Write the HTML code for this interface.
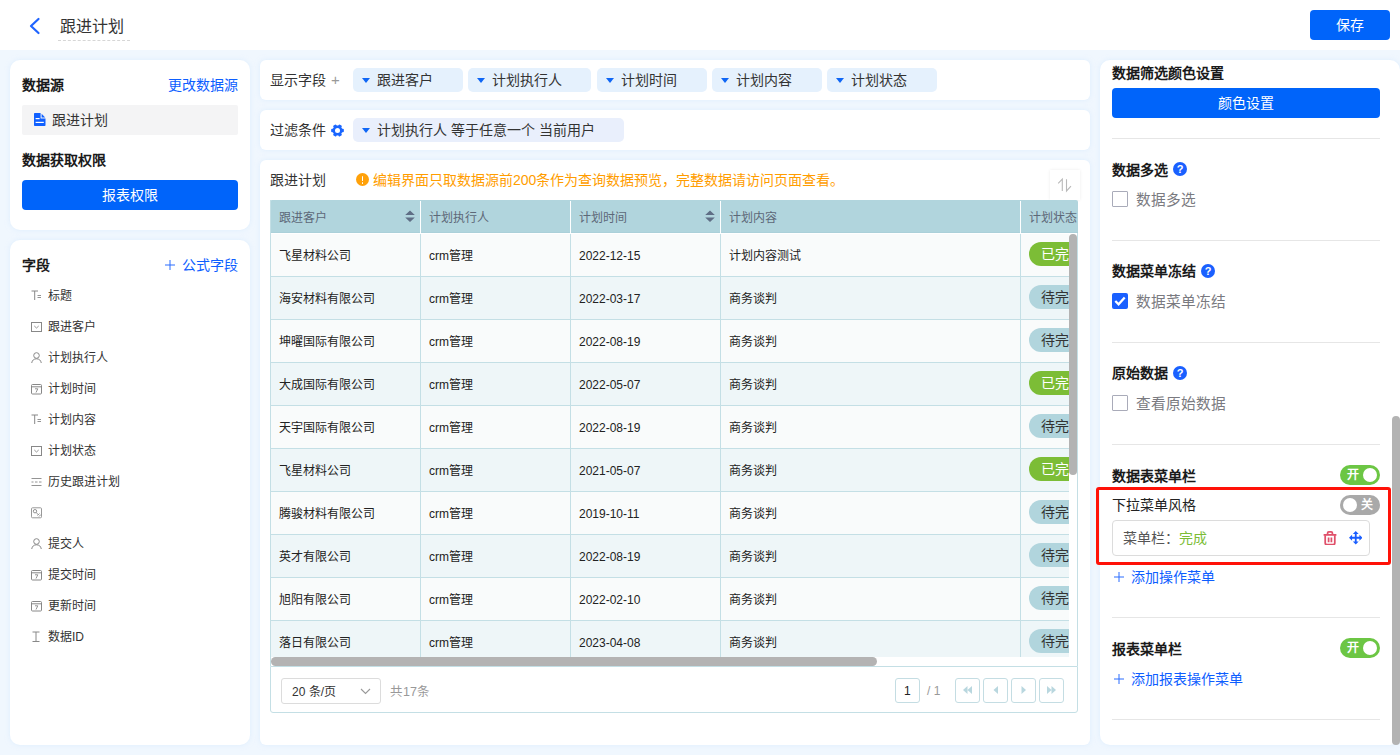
<!DOCTYPE html>
<html lang="zh-CN"><head><meta charset="utf-8">
<style>
*{box-sizing:border-box;margin:0;padding:0}
html,body{width:1400px;height:755px;overflow:hidden}
body{position:relative;background:#f0f7fe;font-family:"Liberation Sans",sans-serif;font-size:14px;color:#333}
.abs{position:absolute}
.panel{position:absolute;background:#fff;border-radius:10px;box-shadow:0 0 5px rgba(205,230,253,0.55)}
.t{position:absolute;white-space:nowrap;line-height:1}
.b{font-weight:bold;color:#1a1a1a}
.blue{color:#0d5eff}
.btn{position:absolute;background:#0064fa;color:#fff;border-radius:4px;text-align:center;font-size:14px}
.chip{position:absolute;top:68px;height:24px;background:#e5f1fd;border-radius:5px}
.caret{position:absolute;width:0;height:0;border-left:4px solid transparent;border-right:4px solid transparent;border-top:5px solid #0f66f5}
.fi{position:absolute;left:48px;font-size:12px;color:#333;line-height:1}
.cell{position:absolute;font-size:12px;color:#222;line-height:1;white-space:nowrap}
.hd{position:absolute;font-size:12px;color:#5d6878;line-height:1;white-space:nowrap}
.pill{position:absolute;left:1029px;width:60px;height:24px;border-radius:12px;color:#fff;font-size:14px;line-height:24px;padding-left:12px}
.div{position:absolute;left:1112px;width:268px;height:1px;background:#e6e6e6}
.tg{position:absolute;left:1340px;width:40px;height:20px;border-radius:10px}
.knob{position:absolute;top:2px;width:16px;height:16px;border-radius:8px;background:#fff}
.cb{position:absolute;left:1112px;width:16px;height:16px;border:1px solid #a9abb9;border-radius:1px;background:#fff}
.q{position:absolute;width:14px;height:14px;border-radius:7px;background:#1a60ff;color:#fff;font-size:11px;font-weight:bold;text-align:center;line-height:14px}
.pg{position:absolute;top:678px;width:25px;height:25px;border:1px solid #c4dde3;border-radius:3px;background:#fff}
</style></head><body>

<div class="abs" style="left:0;top:0;width:1400px;height:50px;background:#fff"></div>
<svg class="abs" style="left:27px;top:16px" width="16" height="20" viewBox="0 0 16 20"><path d="M11.5 3 L4 10 L11.5 17" fill="none" stroke="#1f64ff" stroke-width="2.2" stroke-linecap="round" stroke-linejoin="round"/></svg>
<div class="t" style="left:60px;top:19px;font-size:16px;color:#333">跟进计划</div>
<div class="abs" style="left:58px;top:40px;width:72px;border-top:1px dashed #d6d6d6"></div>
<div class="btn" style="left:1310px;top:10px;width:80px;height:30px;line-height:30px">保存</div>
<div class="panel" style="left:10px;top:60px;width:240px;height:170px"></div>
<div class="t b" style="left:22px;top:78px">数据源</div>
<div class="t blue" style="left:168px;top:78px">更改数据源</div>
<div class="abs" style="left:22px;top:105px;width:216px;height:30px;background:#f4f4f5;border-radius:2px"></div>
<svg class="abs" style="left:33.5px;top:113px" width="12" height="13" viewBox="0 0 12 13"><path d="M0.8 0 H6.6 V5.4 H11.5 V12.2 Q11.5 13 10.7 13 H0.8 Q0 13 0 12.2 V0.8 Q0 0 0.8 0 Z" fill="#1060ff"/><path d="M7.6 0.7 L11.2 4.4 H7.6 Z" fill="#1060ff"/><rect x="1.6" y="5" width="4" height="1.2" fill="#fff"/><rect x="1.6" y="8.8" width="8.2" height="1.2" fill="#fff"/></svg>
<div class="t" style="left:52px;top:113px">跟进计划</div>
<div class="t b" style="left:22px;top:153px">数据获取权限</div>
<div class="btn" style="left:22px;top:180px;width:216px;height:30px;line-height:30px">报表权限</div>
<div class="panel" style="left:10px;top:240px;width:240px;height:505px"></div>
<div class="t b" style="left:22px;top:258px">字段</div>
<svg class="abs" style="left:165px;top:260px" width="10" height="10" viewBox="0 0 10 10"><path d="M5 0 V10 M0 5 H10" stroke="#2a6cff" stroke-width="1"/></svg>
<div class="t blue" style="left:182px;top:258px">公式字段</div>
<svg class="abs" style="left:30.5px;top:290px" width="11" height="12" viewBox="0 0 11 12"><path d="M0.5 1 H7 M3.7 1 V10" stroke="#888" stroke-width="1" fill="none"/><path d="M6.5 5.5 H10 M6.5 7.5 H10" stroke="#888" stroke-width="0.9" fill="none"/></svg>
<div class="fi" style="top:290px">标题</div>
<svg class="abs" style="left:30.5px;top:321px" width="11" height="12" viewBox="0 0 11 12"><rect x="0.5" y="1.5" width="10" height="9" fill="none" stroke="#888" stroke-width="1"/><path d="M3.3 5 L5.5 7 L7.7 5" fill="none" stroke="#888" stroke-width="0.9"/></svg>
<div class="fi" style="top:321px">跟进客户</div>
<svg class="abs" style="left:30.5px;top:352px" width="11" height="12" viewBox="0 0 11 12"><circle cx="5.5" cy="3.5" r="2.8" fill="none" stroke="#888" stroke-width="1"/><path d="M0.7 11 Q1.5 6.8 5.5 6.8 Q9.5 6.8 10.3 11" fill="none" stroke="#888" stroke-width="1"/></svg>
<div class="fi" style="top:352px">计划执行人</div>
<svg class="abs" style="left:30.5px;top:383px" width="11" height="12" viewBox="0 0 11 12"><rect x="0.5" y="1.5" width="10" height="9.5" rx="1" fill="none" stroke="#888" stroke-width="1"/><path d="M0.5 3.8 H10.5" stroke="#888" stroke-width="1"/><path d="M4 5.8 H6.8 L5 9.5" fill="none" stroke="#888" stroke-width="0.9"/></svg>
<div class="fi" style="top:383px">计划时间</div>
<svg class="abs" style="left:30.5px;top:414px" width="11" height="12" viewBox="0 0 11 12"><path d="M0.5 1 H7 M3.7 1 V10" stroke="#888" stroke-width="1" fill="none"/><path d="M6.5 5.5 H10 M6.5 7.5 H10" stroke="#888" stroke-width="0.9" fill="none"/></svg>
<div class="fi" style="top:414px">计划内容</div>
<svg class="abs" style="left:30.5px;top:445px" width="11" height="12" viewBox="0 0 11 12"><rect x="0.5" y="1.5" width="10" height="9" fill="none" stroke="#888" stroke-width="1"/><path d="M3.3 5 L5.5 7 L7.7 5" fill="none" stroke="#888" stroke-width="0.9"/></svg>
<div class="fi" style="top:445px">计划状态</div>
<svg class="abs" style="left:30.5px;top:476px" width="11" height="12" viewBox="0 0 11 12"><path d="M0.5 2.5 H10.5 M0.5 6 H2.5 M4 6 H6.5 M8 6 H10.5 M0.5 9.5 H10.5" stroke="#888" stroke-width="0.9" fill="none"/></svg>
<div class="fi" style="top:476px">历史跟进计划</div>
<svg class="abs" style="left:30.5px;top:507px" width="11" height="12" viewBox="0 0 11 12"><rect x="0.5" y="0.8" width="10" height="10" rx="1" fill="none" stroke="#999" stroke-width="1"/><circle cx="4" cy="4.2" r="1.7" fill="none" stroke="#888" stroke-width="0.9"/><path d="M5.2 5.6 L7 7.4 M6.5 8.5 L8.5 6.5 M8 9.5 L10 7.5" fill="none" stroke="#888" stroke-width="0.9"/></svg>
<svg class="abs" style="left:30.5px;top:538px" width="11" height="12" viewBox="0 0 11 12"><circle cx="5.5" cy="3.5" r="2.8" fill="none" stroke="#888" stroke-width="1"/><path d="M0.7 11 Q1.5 6.8 5.5 6.8 Q9.5 6.8 10.3 11" fill="none" stroke="#888" stroke-width="1"/></svg>
<div class="fi" style="top:538px">提交人</div>
<svg class="abs" style="left:30.5px;top:569px" width="11" height="12" viewBox="0 0 11 12"><rect x="0.5" y="1.5" width="10" height="9.5" rx="1" fill="none" stroke="#888" stroke-width="1"/><path d="M0.5 3.8 H10.5" stroke="#888" stroke-width="1"/><path d="M4 5.8 H6.8 L5 9.5" fill="none" stroke="#888" stroke-width="0.9"/></svg>
<div class="fi" style="top:569px">提交时间</div>
<svg class="abs" style="left:30.5px;top:600px" width="11" height="12" viewBox="0 0 11 12"><rect x="0.5" y="1.5" width="10" height="9.5" rx="1" fill="none" stroke="#888" stroke-width="1"/><path d="M0.5 3.8 H10.5" stroke="#888" stroke-width="1"/><path d="M4 5.8 H6.8 L5 9.5" fill="none" stroke="#888" stroke-width="0.9"/></svg>
<div class="fi" style="top:600px">更新时间</div>
<svg class="abs" style="left:30.5px;top:631px" width="11" height="12" viewBox="0 0 11 12"><path d="M1.5 1 H8.5 M5 1 V10 M1.5 10.5 H8.5" stroke="#888" stroke-width="1" fill="none"/></svg>
<div class="fi" style="top:631px">数据ID</div>
<div class="panel" style="left:260px;top:60px;width:830px;height:40px;border-radius:6px"></div>
<div class="panel" style="left:260px;top:110px;width:830px;height:40px;border-radius:6px"></div>
<div class="panel" style="left:260px;top:160px;width:830px;height:585px;border-radius:6px"></div>
<div class="t" style="left:270px;top:73px">显示字段</div>
<div class="t" style="left:331px;top:72px;color:#999;font-size:15px">+</div>
<div class="chip" style="left:353px;width:110px"></div>
<div class="caret" style="left:362px;top:78px"></div>
<div class="t" style="left:377px;top:73px">跟进客户</div>
<div class="chip" style="left:468px;width:123px"></div>
<div class="caret" style="left:477px;top:78px"></div>
<div class="t" style="left:492px;top:73px">计划执行人</div>
<div class="chip" style="left:597px;width:110px"></div>
<div class="caret" style="left:606px;top:78px"></div>
<div class="t" style="left:621px;top:73px">计划时间</div>
<div class="chip" style="left:712px;width:110px"></div>
<div class="caret" style="left:721px;top:78px"></div>
<div class="t" style="left:736px;top:73px">计划内容</div>
<div class="chip" style="left:827px;width:110px"></div>
<div class="caret" style="left:836px;top:78px"></div>
<div class="t" style="left:851px;top:73px">计划状态</div>
<div class="t" style="left:270px;top:123px">过滤条件</div>
<svg class="abs" style="left:331px;top:123.5px" width="13" height="13" viewBox="0 0 26 26"><g fill="#1a66ff"><circle cx="13" cy="13" r="9.8"/><rect x="9.5" y="0.3" width="7" height="6" rx="2" transform="rotate(30 13 13)"/><rect x="9.5" y="0.3" width="7" height="6" rx="2" transform="rotate(90 13 13)"/><rect x="9.5" y="0.3" width="7" height="6" rx="2" transform="rotate(150 13 13)"/><rect x="9.5" y="0.3" width="7" height="6" rx="2" transform="rotate(210 13 13)"/><rect x="9.5" y="0.3" width="7" height="6" rx="2" transform="rotate(270 13 13)"/><rect x="9.5" y="0.3" width="7" height="6" rx="2" transform="rotate(330 13 13)"/></g><circle cx="13" cy="13" r="5" fill="#fff"/></svg>
<div class="chip" style="left:353px;top:118px;width:271px;background:#e9effc"></div>
<div class="caret" style="left:362px;top:128px"></div>
<div class="t" style="left:377px;top:123px">计划执行人 等于任意一个 当前用户</div>
<div class="t" style="left:270px;top:173px">跟进计划</div>
<div class="abs" style="left:356px;top:173px;width:13px;height:13px;border-radius:7px;background:#ffa10a"></div>
<div class="abs" style="left:361.7px;top:175.5px;width:1.8px;height:5px;background:#fff;border-radius:1px"></div>
<div class="abs" style="left:361.7px;top:182px;width:1.8px;height:1.8px;background:#fff;border-radius:1px"></div>
<div class="t" style="left:373px;top:173px;color:#ff9d00;font-size:14px">编辑界面只取数据源前200条作为查询数据预览，完整数据请访问页面查看。</div>
<div class="abs" style="left:1050px;top:170px;width:30px;height:30px;background:#fff;box-shadow:0 0 3px rgba(0,0,0,0.08)"></div>
<svg class="abs" style="left:1055px;top:175px" width="20" height="20" viewBox="0 0 20 20"><path d="M3.2 8.3 L7.3 4.2 V16 M11.5 4.2 V16 L16 11.2" fill="none" stroke="#b9b9b9" stroke-width="1.1"/></svg>
<div class="abs" style="left:270px;top:200px;width:808px;height:33px;background:#b1d5dd;border-radius:2px 2px 0 0;border-bottom:1px solid #abd0d9"></div>
<div class="abs" style="left:420px;top:201px;width:1px;height:32px;background:#fff"></div>
<div class="abs" style="left:570px;top:201px;width:1px;height:32px;background:#fff"></div>
<div class="abs" style="left:720px;top:201px;width:1px;height:32px;background:#fff"></div>
<div class="abs" style="left:1020px;top:201px;width:1px;height:32px;background:#fff"></div>
<div class="hd" style="left:279px;top:212px">跟进客户</div>
<div class="hd" style="left:429px;top:212px">计划执行人</div>
<div class="hd" style="left:579px;top:212px">计划时间</div>
<div class="hd" style="left:729px;top:212px">计划内容</div>
<div class="hd" style="left:1029px;top:212px">计划状态</div>
<svg class="abs" style="left:405px;top:210px" width="10" height="13" viewBox="0 0 10 13"><path d="M5 0.5 L9.8 5 H0.2 Z M0.2 7.5 H9.8 L5 12 Z" fill="#5f6e85"/></svg>
<svg class="abs" style="left:705px;top:210px" width="10" height="13" viewBox="0 0 10 13"><path d="M5 0.5 L9.8 5 H0.2 Z M0.2 7.5 H9.8 L5 12 Z" fill="#5f6e85"/></svg>
<div class="abs" style="left:270px;top:234px;width:799px;height:423px;overflow:hidden">
<div class="abs" style="left:0;top:0px;width:808px;height:43px;background:#f9fbfb;border-bottom:1px solid #c4dfe5"></div>
<div class="abs" style="left:150px;top:0px;width:1px;height:43px;background:#c4dfe5"></div>
<div class="abs" style="left:300px;top:0px;width:1px;height:43px;background:#c4dfe5"></div>
<div class="abs" style="left:450px;top:0px;width:1px;height:43px;background:#c4dfe5"></div>
<div class="abs" style="left:750px;top:0px;width:1px;height:43px;background:#c4dfe5"></div>
<div class="cell" style="left:9px;top:16px">飞星材料公司</div>
<div class="cell" style="left:159px;top:16px">crm管理</div>
<div class="cell" style="left:309px;top:16px">2022-12-15</div>
<div class="cell" style="left:459px;top:16px">计划内容测试</div>
<div class="pill" style="left:759px;top:8px;background:#7cbd36">已完成</div>
<div class="abs" style="left:0;top:43px;width:808px;height:43px;background:#eef6f8;border-bottom:1px solid #c4dfe5"></div>
<div class="abs" style="left:150px;top:43px;width:1px;height:43px;background:#c4dfe5"></div>
<div class="abs" style="left:300px;top:43px;width:1px;height:43px;background:#c4dfe5"></div>
<div class="abs" style="left:450px;top:43px;width:1px;height:43px;background:#c4dfe5"></div>
<div class="abs" style="left:750px;top:43px;width:1px;height:43px;background:#c4dfe5"></div>
<div class="cell" style="left:9px;top:59px">海安材料有限公司</div>
<div class="cell" style="left:159px;top:59px">crm管理</div>
<div class="cell" style="left:309px;top:59px">2022-03-17</div>
<div class="cell" style="left:459px;top:59px">商务谈判</div>
<div class="pill" style="left:759px;top:51px;background:#b1d5dd;color:#333">待完成</div>
<div class="abs" style="left:0;top:86px;width:808px;height:43px;background:#f9fbfb;border-bottom:1px solid #c4dfe5"></div>
<div class="abs" style="left:150px;top:86px;width:1px;height:43px;background:#c4dfe5"></div>
<div class="abs" style="left:300px;top:86px;width:1px;height:43px;background:#c4dfe5"></div>
<div class="abs" style="left:450px;top:86px;width:1px;height:43px;background:#c4dfe5"></div>
<div class="abs" style="left:750px;top:86px;width:1px;height:43px;background:#c4dfe5"></div>
<div class="cell" style="left:9px;top:102px">坤曜国际有限公司</div>
<div class="cell" style="left:159px;top:102px">crm管理</div>
<div class="cell" style="left:309px;top:102px">2022-08-19</div>
<div class="cell" style="left:459px;top:102px">商务谈判</div>
<div class="pill" style="left:759px;top:94px;background:#b1d5dd;color:#333">待完成</div>
<div class="abs" style="left:0;top:129px;width:808px;height:43px;background:#eef6f8;border-bottom:1px solid #c4dfe5"></div>
<div class="abs" style="left:150px;top:129px;width:1px;height:43px;background:#c4dfe5"></div>
<div class="abs" style="left:300px;top:129px;width:1px;height:43px;background:#c4dfe5"></div>
<div class="abs" style="left:450px;top:129px;width:1px;height:43px;background:#c4dfe5"></div>
<div class="abs" style="left:750px;top:129px;width:1px;height:43px;background:#c4dfe5"></div>
<div class="cell" style="left:9px;top:145px">大成国际有限公司</div>
<div class="cell" style="left:159px;top:145px">crm管理</div>
<div class="cell" style="left:309px;top:145px">2022-05-07</div>
<div class="cell" style="left:459px;top:145px">商务谈判</div>
<div class="pill" style="left:759px;top:137px;background:#7cbd36">已完成</div>
<div class="abs" style="left:0;top:172px;width:808px;height:43px;background:#f9fbfb;border-bottom:1px solid #c4dfe5"></div>
<div class="abs" style="left:150px;top:172px;width:1px;height:43px;background:#c4dfe5"></div>
<div class="abs" style="left:300px;top:172px;width:1px;height:43px;background:#c4dfe5"></div>
<div class="abs" style="left:450px;top:172px;width:1px;height:43px;background:#c4dfe5"></div>
<div class="abs" style="left:750px;top:172px;width:1px;height:43px;background:#c4dfe5"></div>
<div class="cell" style="left:9px;top:188px">天宇国际有限公司</div>
<div class="cell" style="left:159px;top:188px">crm管理</div>
<div class="cell" style="left:309px;top:188px">2022-08-19</div>
<div class="cell" style="left:459px;top:188px">商务谈判</div>
<div class="pill" style="left:759px;top:180px;background:#b1d5dd;color:#333">待完成</div>
<div class="abs" style="left:0;top:215px;width:808px;height:43px;background:#eef6f8;border-bottom:1px solid #c4dfe5"></div>
<div class="abs" style="left:150px;top:215px;width:1px;height:43px;background:#c4dfe5"></div>
<div class="abs" style="left:300px;top:215px;width:1px;height:43px;background:#c4dfe5"></div>
<div class="abs" style="left:450px;top:215px;width:1px;height:43px;background:#c4dfe5"></div>
<div class="abs" style="left:750px;top:215px;width:1px;height:43px;background:#c4dfe5"></div>
<div class="cell" style="left:9px;top:231px">飞星材料公司</div>
<div class="cell" style="left:159px;top:231px">crm管理</div>
<div class="cell" style="left:309px;top:231px">2021-05-07</div>
<div class="cell" style="left:459px;top:231px">商务谈判</div>
<div class="pill" style="left:759px;top:223px;background:#7cbd36">已完成</div>
<div class="abs" style="left:0;top:258px;width:808px;height:43px;background:#f9fbfb;border-bottom:1px solid #c4dfe5"></div>
<div class="abs" style="left:150px;top:258px;width:1px;height:43px;background:#c4dfe5"></div>
<div class="abs" style="left:300px;top:258px;width:1px;height:43px;background:#c4dfe5"></div>
<div class="abs" style="left:450px;top:258px;width:1px;height:43px;background:#c4dfe5"></div>
<div class="abs" style="left:750px;top:258px;width:1px;height:43px;background:#c4dfe5"></div>
<div class="cell" style="left:9px;top:274px">腾骏材料有限公司</div>
<div class="cell" style="left:159px;top:274px">crm管理</div>
<div class="cell" style="left:309px;top:274px">2019-10-11</div>
<div class="cell" style="left:459px;top:274px">商务谈判</div>
<div class="pill" style="left:759px;top:266px;background:#b1d5dd;color:#333">待完成</div>
<div class="abs" style="left:0;top:301px;width:808px;height:43px;background:#eef6f8;border-bottom:1px solid #c4dfe5"></div>
<div class="abs" style="left:150px;top:301px;width:1px;height:43px;background:#c4dfe5"></div>
<div class="abs" style="left:300px;top:301px;width:1px;height:43px;background:#c4dfe5"></div>
<div class="abs" style="left:450px;top:301px;width:1px;height:43px;background:#c4dfe5"></div>
<div class="abs" style="left:750px;top:301px;width:1px;height:43px;background:#c4dfe5"></div>
<div class="cell" style="left:9px;top:317px">英才有限公司</div>
<div class="cell" style="left:159px;top:317px">crm管理</div>
<div class="cell" style="left:309px;top:317px">2022-08-19</div>
<div class="cell" style="left:459px;top:317px">商务谈判</div>
<div class="pill" style="left:759px;top:309px;background:#b1d5dd;color:#333">待完成</div>
<div class="abs" style="left:0;top:344px;width:808px;height:43px;background:#f9fbfb;border-bottom:1px solid #c4dfe5"></div>
<div class="abs" style="left:150px;top:344px;width:1px;height:43px;background:#c4dfe5"></div>
<div class="abs" style="left:300px;top:344px;width:1px;height:43px;background:#c4dfe5"></div>
<div class="abs" style="left:450px;top:344px;width:1px;height:43px;background:#c4dfe5"></div>
<div class="abs" style="left:750px;top:344px;width:1px;height:43px;background:#c4dfe5"></div>
<div class="cell" style="left:9px;top:360px">旭阳有限公司</div>
<div class="cell" style="left:159px;top:360px">crm管理</div>
<div class="cell" style="left:309px;top:360px">2022-02-10</div>
<div class="cell" style="left:459px;top:360px">商务谈判</div>
<div class="pill" style="left:759px;top:352px;background:#b1d5dd;color:#333">待完成</div>
<div class="abs" style="left:0;top:387px;width:808px;height:43px;background:#eef6f8;border-bottom:1px solid #c4dfe5"></div>
<div class="abs" style="left:150px;top:387px;width:1px;height:43px;background:#c4dfe5"></div>
<div class="abs" style="left:300px;top:387px;width:1px;height:43px;background:#c4dfe5"></div>
<div class="abs" style="left:450px;top:387px;width:1px;height:43px;background:#c4dfe5"></div>
<div class="abs" style="left:750px;top:387px;width:1px;height:43px;background:#c4dfe5"></div>
<div class="cell" style="left:9px;top:403px">落日有限公司</div>
<div class="cell" style="left:159px;top:403px">crm管理</div>
<div class="cell" style="left:309px;top:403px">2023-04-08</div>
<div class="cell" style="left:459px;top:403px">商务谈判</div>
<div class="pill" style="left:759px;top:395px;background:#b1d5dd;color:#333">待完成</div>
</div>
<div class="abs" style="left:270px;top:200px;width:1px;height:466px;background:#c4dfe5"></div>
<div class="abs" style="left:1077px;top:233px;width:1px;height:433px;background:#c4dfe5"></div>
<div class="abs" style="left:1069px;top:234px;width:8px;height:241px;border-radius:4px;background:#b3b3b3"></div>
<div class="abs" style="left:271px;top:657px;width:806px;height:9px;background:#fff"></div>
<div class="abs" style="left:271px;top:657px;width:606px;height:9px;border-radius:5px;background:#b4b3b3"></div>
<div class="abs" style="left:270px;top:666px;width:808px;height:47px;border:1px solid #c4dfe5;border-radius:0 0 3px 3px"></div>
<div class="abs" style="left:281px;top:678px;width:100px;height:26px;border:1px solid #dcdcdc;border-radius:3px"></div>
<div class="t" style="left:292px;top:686px;font-size:12px;color:#333">20 条/页</div>
<svg class="abs" style="left:360px;top:688px" width="11" height="7" viewBox="0 0 11 7"><path d="M1 1 L5.5 5.5 L10 1" fill="none" stroke="#999" stroke-width="1.1"/></svg>
<div class="t" style="left:390px;top:686px;font-size:12.5px;color:#999">共17条</div>
<div class="pg" style="left:895px"></div>
<div class="t" style="left:904px;top:685px;font-size:12px;color:#222">1</div>
<div class="t" style="left:927px;top:685px;font-size:12px;color:#999">/ 1</div>
<div class="pg" style="left:955px"></div>
<svg class="abs" style="left:961px;top:684px" width="13" height="12" viewBox="0 0 13 12"><path d="M6.5 2 L2 6 L6.5 10 Z M11 2 L6.5 6 L11 10 Z" fill="#b9d7df"/></svg>
<div class="pg" style="left:983px"></div>
<svg class="abs" style="left:989px;top:684px" width="13" height="12" viewBox="0 0 13 12"><path d="M9 2 L4.5 6 L9 10 Z" fill="#b9d7df"/></svg>
<div class="pg" style="left:1011px"></div>
<svg class="abs" style="left:1017px;top:684px" width="13" height="12" viewBox="0 0 13 12"><path d="M4.5 2 L9 6 L4.5 10 Z" fill="#b9d7df"/></svg>
<div class="pg" style="left:1039px"></div>
<svg class="abs" style="left:1045px;top:684px" width="13" height="12" viewBox="0 0 13 12"><path d="M2 2 L6.5 6 L2 10 Z M6.5 2 L11 6 L6.5 10 Z" fill="#b9d7df"/></svg>
<div class="panel" style="left:1100px;top:60px;width:300px;height:685px;border-radius:10px"></div>
<div class="t b" style="left:1112px;top:66px">数据筛选颜色设置</div>
<div class="btn" style="left:1112px;top:88px;width:268px;height:30px;line-height:30px">颜色设置</div>
<div class="div" style="top:138px"></div>
<div class="div" style="top:240px"></div>
<div class="div" style="top:342px"></div>
<div class="div" style="top:444px"></div>
<div class="div" style="top:617px"></div>
<div class="div" style="top:719px"></div>
<div class="t b" style="left:1112px;top:163px">数据多选</div>
<div class="q" style="left:1173px;top:162px">?</div>
<div class="cb" style="top:191px"></div>
<div class="t" style="left:1136px;top:193px;color:#7a7a80;font-size:14.7px">数据多选</div>
<div class="t b" style="left:1112px;top:264px">数据菜单冻结</div>
<div class="q" style="left:1201px;top:264px">?</div>
<div class="abs" style="left:1112px;top:293px;width:16px;height:16px;border-radius:2px;background:#1a60ff"></div>
<svg class="abs" style="left:1112px;top:293px" width="16" height="16" viewBox="0 0 16 16"><path d="M3.3 8 L6.6 11.3 L12.7 4.6" fill="none" stroke="#fff" stroke-width="2.3"/></svg>
<div class="t" style="left:1136px;top:295px;color:#7a7a80;font-size:14.7px">数据菜单冻结</div>
<div class="t b" style="left:1112px;top:366px">原始数据</div>
<div class="q" style="left:1173px;top:366px">?</div>
<div class="cb" style="top:395px"></div>
<div class="t" style="left:1136px;top:397px;color:#7a7a80;font-size:14.7px">查看原始数据</div>
<div class="t b" style="left:1112px;top:469px">数据表菜单栏</div>
<div class="tg" style="top:465px;background:#6cc644"></div>
<div class="abs" style="left:1363px;top:468px;width:14px;height:14px;border-radius:7px;background:#fff"></div>
<div class="t" style="left:1346.5px;top:469px;color:#fff;font-size:12px;font-weight:bold">开</div>
<div class="abs" style="left:1096px;top:487px;width:295px;height:78px;border:3px solid #ff1208;border-radius:3px"></div>
<div class="t" style="left:1112px;top:498px;color:#222">下拉菜单风格</div>
<div class="tg" style="top:495px;background:#a9a9a9"></div>
<div class="abs" style="left:1343px;top:498px;width:14px;height:14px;border-radius:7px;background:#fff"></div>
<div class="t" style="left:1361px;top:499px;color:#fff;font-size:12px;font-weight:bold">关</div>
<div class="abs" style="left:1112px;top:520px;width:258px;height:36px;border:1px solid #dcdcdc;border-radius:4px"></div>
<div class="t" style="left:1123px;top:531px;color:#555">菜单栏：<span style="color:#7cbd36">完成</span></div>
<svg class="abs" style="left:1323px;top:530.5px" width="14" height="14.5" viewBox="0 0 14 14.5"><g fill="none" stroke="#e0506a" stroke-width="1.75"><path d="M4.6 3.4 V2.1 Q4.6 0.9 5.8 0.9 H8.2 Q9.4 0.9 9.4 2.1 V3.4"/><path d="M0.6 3.9 H13.4"/><path d="M2.2 4.2 V12 Q2.2 13.7 3.9 13.7 H10.1 Q11.8 13.7 11.8 12 V4.2"/><path d="M5.6 6.5 V11.3 M8.4 6.5 V11.3"/></g></svg>
<svg class="abs" style="left:1348.5px;top:531px" width="13.5" height="13.5" viewBox="0 0 14 14"><path d="M7 2.5 V11.5 M2.5 7 H11.5" stroke="#1a5eff" stroke-width="1.9"/><path d="M7 0 L10 3.2 H4 Z M7 14 L10 10.8 H4 Z M0 7 L3.2 4 V10 Z M14 7 L10.8 4 V10 Z" fill="#1a5eff"/></svg>
<svg class="abs" style="left:1114px;top:572px" width="10" height="10" viewBox="0 0 10 10"><path d="M5 0 V10 M0 5 H10" stroke="#2a6cff" stroke-width="1"/></svg>
<div class="t blue" style="left:1131px;top:570px">添加操作菜单</div>
<div class="t b" style="left:1112px;top:642px">报表菜单栏</div>
<div class="tg" style="top:638px;background:#6cc644"></div>
<div class="abs" style="left:1363px;top:641px;width:14px;height:14px;border-radius:7px;background:#fff"></div>
<div class="t" style="left:1346.5px;top:642px;color:#fff;font-size:12px;font-weight:bold">开</div>
<svg class="abs" style="left:1114px;top:674px" width="10" height="10" viewBox="0 0 10 10"><path d="M5 0 V10 M0 5 H10" stroke="#2a6cff" stroke-width="1"/></svg>
<div class="t blue" style="left:1131px;top:672px">添加报表操作菜单</div>
<div class="abs" style="left:1392px;top:416px;width:8px;height:329px;border-radius:4px;background:#b3b3b3"></div>
</body></html>
